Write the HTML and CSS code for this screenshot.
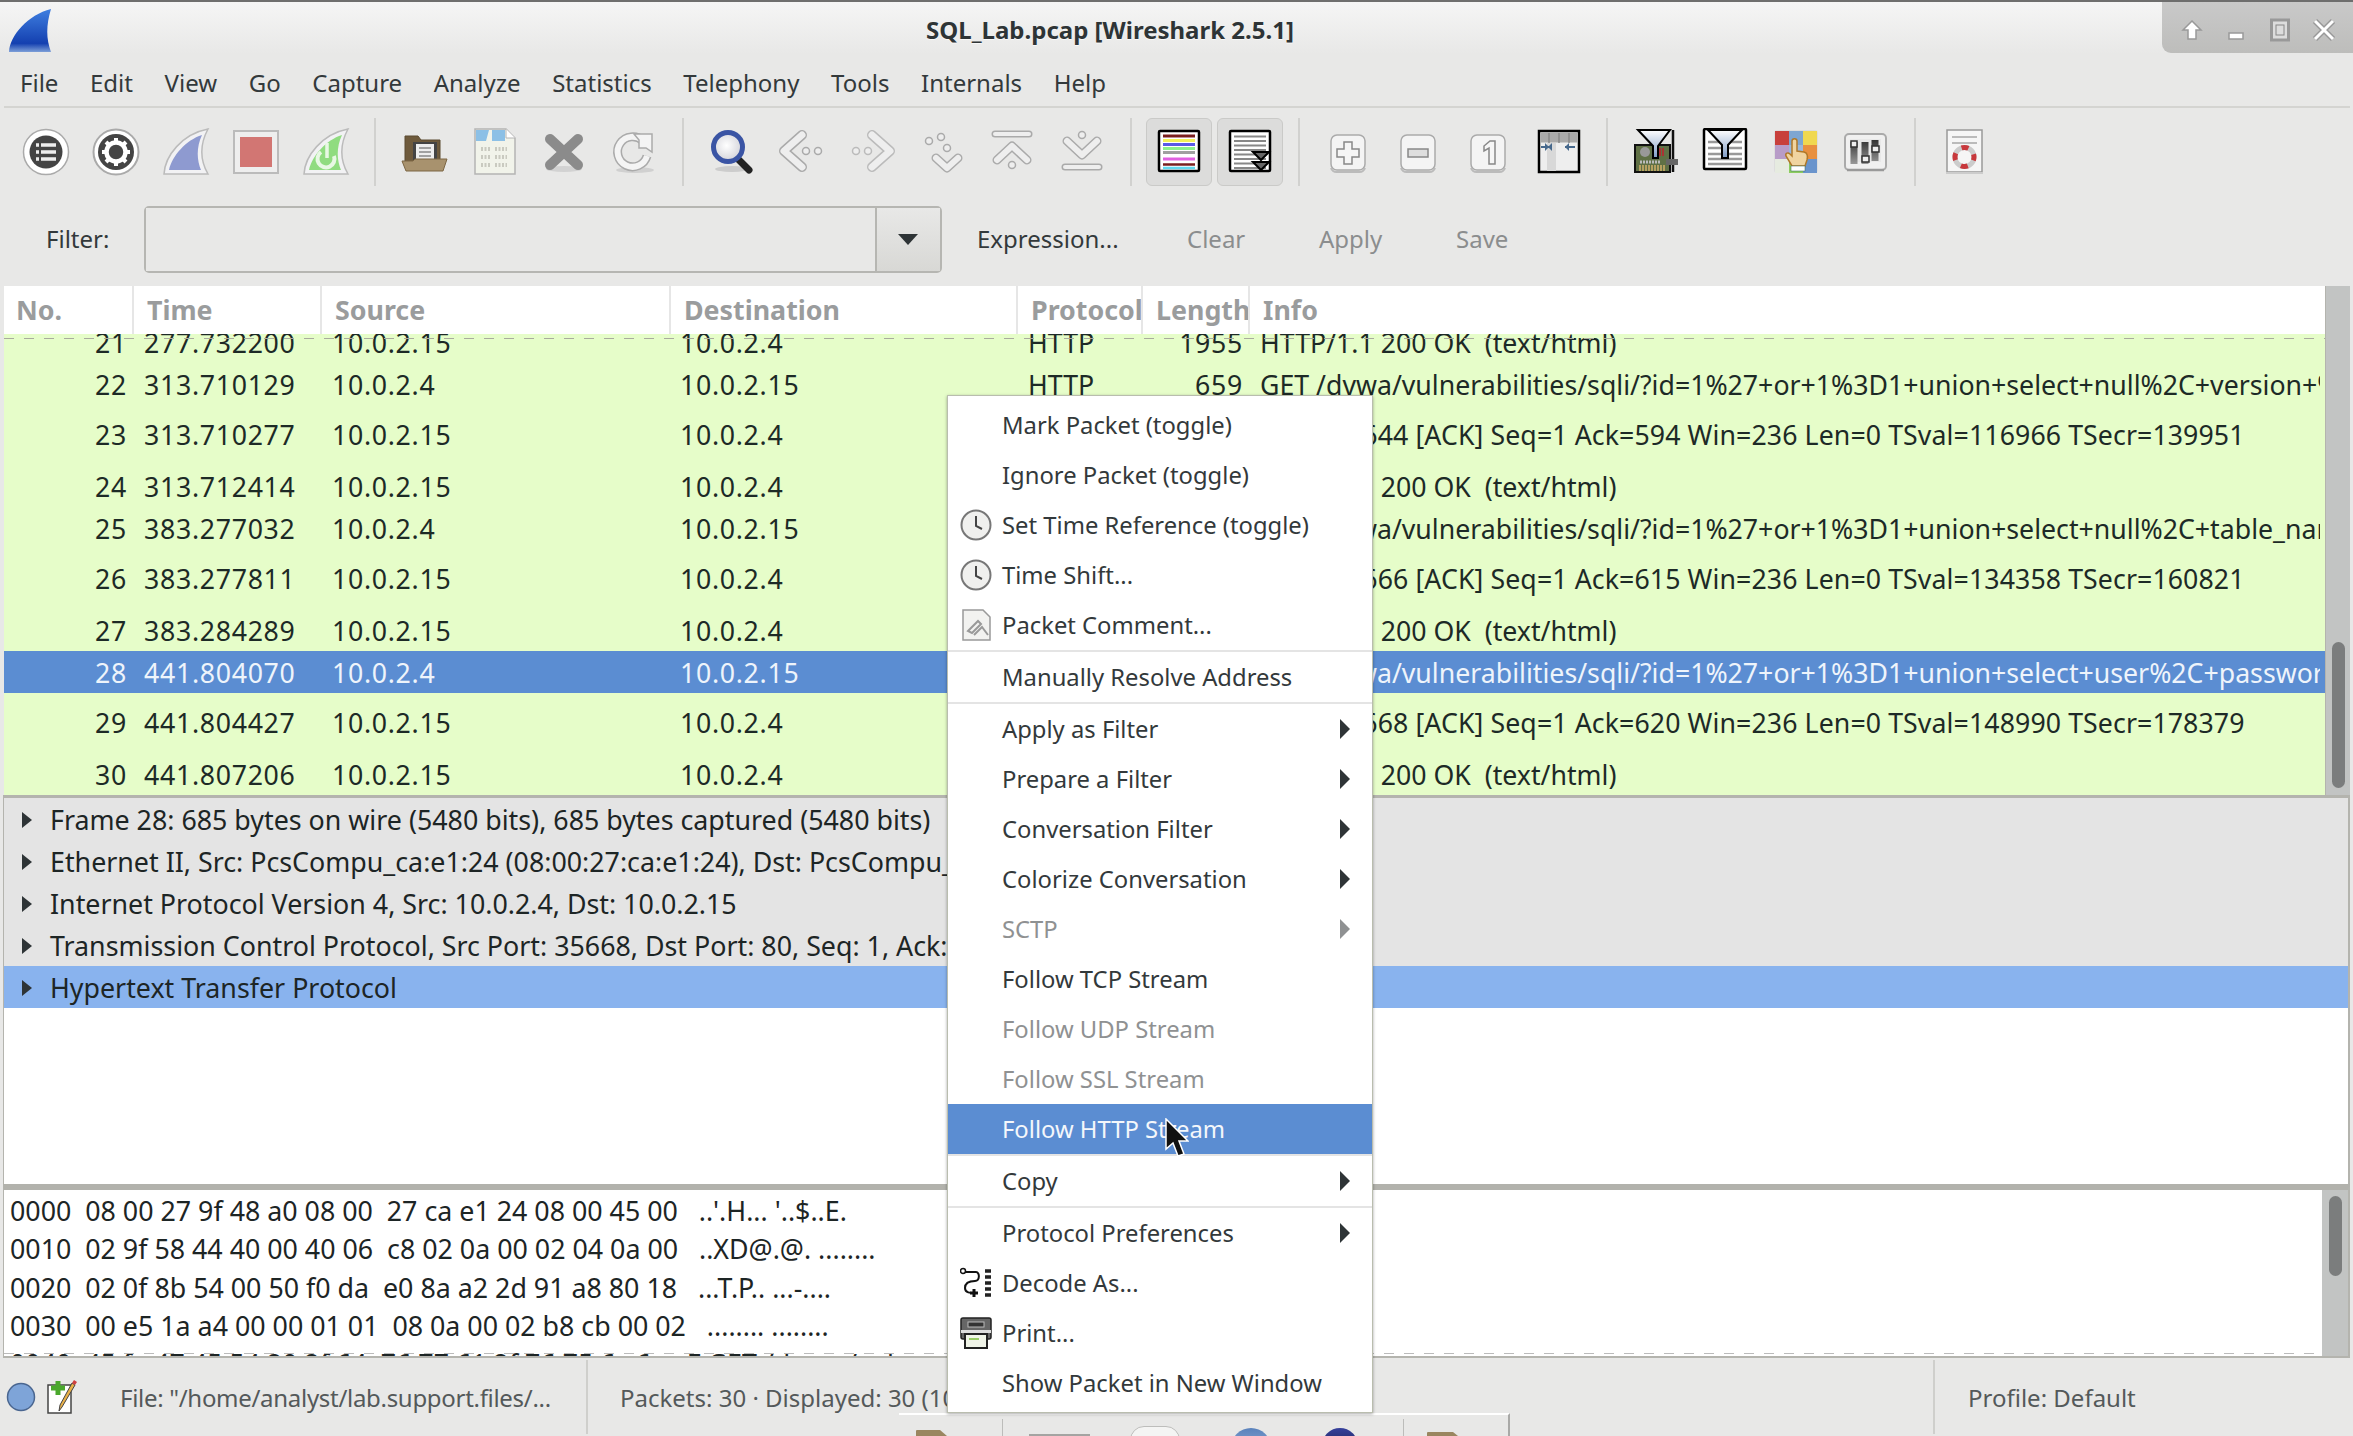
FILE: index.html
```html
<!DOCTYPE html>
<html lang="en">
<head>
<meta charset="utf-8">
<title>SQL_Lab.pcap [Wireshark 2.5.1]</title>
<link rel="stylesheet" href="styles.css">
</head>
<body>
<svg class="defs" aria-hidden="true">
  <defs>
    <linearGradient id="gFin" x1="0" y1="0" x2="0" y2="1"><stop offset="0" stop-color="#3f7fe0"/><stop offset=".8" stop-color="#1440b0"/><stop offset="1" stop-color="#7d9fd8"/></linearGradient>
    <linearGradient id="gFunnel" x1="0" y1="0" x2="0" y2="1"><stop offset="0" stop-color="#fff"/><stop offset="1" stop-color="#7d9ac4"/></linearGradient>
    <linearGradient id="gSlider" x1="0" y1="0" x2="0" y2="1"><stop offset="0" stop-color="#333"/><stop offset="1" stop-color="#999"/></linearGradient>
    <radialGradient id="gLens" cx=".45" cy=".45" r=".6"><stop offset="0" stop-color="#fff"/><stop offset="1" stop-color="#cfcfd6"/></radialGradient>
  </defs>
</svg>
<div class="window">
  <header class="titlebar">
    <svg class="logo" width="44" height="44" viewBox="0 0 44 44"><path d="M1 43C2 26 20 6 43 0 38 16 38 30 43 43Z" fill="url(#gFin)"/></svg>
    <div class="title">SQL_Lab.pcap [Wireshark 2.5.1]</div>
    <div class="winbtns">
      <svg width="24" height="24" viewBox="0 0 24 24"><path d="M12 3 21 12H16V21H8V12H3Z" fill="#fff" stroke="#999" stroke-width="1.5"/></svg>
      <svg width="24" height="24" viewBox="0 0 24 24"><rect x="5" y="15" width="14" height="6" fill="#fff" stroke="#999" stroke-width="1.5"/></svg>
      <svg width="24" height="24" viewBox="0 0 24 24"><rect x="3.5" y="2" width="17" height="20" fill="#ddd" stroke="#999" stroke-width="3"/><rect x="8" y="7" width="8" height="10" fill="none" stroke="#888"/></svg>
      <svg width="24" height="24" viewBox="0 0 24 24"><path d="M3 3 21 21M21 3 3 21" stroke="#999" stroke-width="6"/><path d="M3 3 21 21M21 3 3 21" stroke="#fff" stroke-width="3"/></svg>
    </div>
  </header>
  <nav class="menubar">
    <span>File</span><span>Edit</span><span>View</span><span>Go</span><span>Capture</span><span>Analyze</span><span>Statistics</span><span>Telephony</span><span>Tools</span><span>Internals</span><span>Help</span>
  </nav>
  <div class="toolbar">
    <div class="tool"><svg width="48" height="48" viewBox="0 0 48 48"><circle cx="24" cy="24" r="22.5" fill="#fff" stroke="#aaa" stroke-width="1.5"/><circle cx="24" cy="24" r="16.5" fill="#444"/><path d="M14 17h3M14 24h3M14 31h3M19 17h15M19 24h15M19 31h15" stroke="#eee" stroke-width="3.5"/></svg></div>
    <div class="tool"><svg width="48" height="48" viewBox="0 0 48 48"><circle cx="24" cy="24" r="22.5" fill="#fff" stroke="#aaa" stroke-width="2"/><circle cx="24" cy="24" r="18" fill="#444"/><circle cx="24" cy="24" r="9.500" fill="none" stroke="#fff" stroke-width="4.500"/><path d="M24 10v5M24 33v5M10 24h5M33 24h5M14 14l3.500 3.500M30.500 30.500 34 34M34 14l-3.500 3.500M17.500 30.500 14 34" stroke="#fff" stroke-width="4"/></svg></div>
    <div class="tool"><svg width="48" height="48" viewBox="0 0 48 48"><path d="M2 46C3 28 20 6 46 1 38 16 38 32 46 46Z" fill="#f2f2f4" stroke="#bbb" stroke-width="1.500"/><path d="M7 42C10 28 24 12 40 7 34 20 35 32 39 42Z" fill="#8e9ad0"/></svg></div>
    <div class="tool"><svg width="48" height="48" viewBox="0 0 48 48"><rect x="2" y="3" width="44" height="42" fill="#eee" stroke="#bbb" stroke-width="2"/><rect x="8" y="9" width="32" height="30" fill="#d27673"/></svg></div>
    <div class="tool"><svg width="48" height="48" viewBox="0 0 48 48"><path d="M2 46C3 28 20 6 46 1 38 16 38 32 46 46Z" fill="#f2f2f4" stroke="#bbb" stroke-width="1.500"/><path d="M7 42C10 28 24 12 40 7 34 20 35 32 39 42Z" fill="#90dc80"/><path d="M19 24A8.500 8.500 0 1 0 32 28" fill="none" stroke="#e8f8e4" stroke-width="4"/><path d="M25 15V30" stroke="#e8f8e4" stroke-width="3.500"/></svg></div>
    <i class="sep"></i>
    <div class="tool"><svg width="48" height="48" viewBox="0 0 48 48"><path d="M5 34V8H18L21 12H40V34Z" fill="#6e5a3c" stroke="#5a4a30"/><rect x="13" y="14" width="24" height="20" fill="#444"/><rect x="16" y="16" width="18" height="16" fill="#eee"/><path d="M19 20h12M19 24h12M19 28h12" stroke="#888" stroke-width="1.500"/><path d="M2 33H13L15 31H47L43 43H6Z" fill="#a8926e" stroke="#7c6644"/></svg></div>
    <div class="tool"><svg width="48" height="48" viewBox="0 0 48 48"><path d="M5 1H36L45 10V46H5Z" fill="#f1f3ea" stroke="#b4b4b4" stroke-width="1.500"/><path d="M6 2H19L16 13H6ZM22 2H35V13H22Z" fill="#8cc0e6"/><path d="M36 1V10H45" fill="#fff" stroke="#b4b4b4"/><path d="M11 21h9M25 21h12M11 29h9M25 29h12M11 37h9M25 37h12" stroke="#c9cac0" stroke-width="4" stroke-dasharray="2 1.500"/></svg></div>
    <div class="tool"><svg width="48" height="48" viewBox="0 0 48 48"><ellipse cx="24" cy="41" rx="18" ry="3" fill="#d2d2d2"/><path d="M10 11 38 37M38 11 10 37" stroke="#8b8b8b" stroke-width="10" stroke-linecap="round"/></svg></div>
    <div class="tool"><svg width="48" height="48" viewBox="0 0 48 48"><ellipse cx="25" cy="42" rx="19" ry="3" fill="#d0d0d0"/><path d="M37 28A15 15 0 1 1 33 13" fill="none" stroke="#aaa" stroke-width="9"/><path d="M37 28A15 15 0 1 1 33 13" fill="none" stroke="#f4f4f4" stroke-width="6"/><path d="M24 6H42V24L36 20 H29V12Z" fill="#f4f4f4" stroke="#aaa" stroke-width="1.500"/></svg></div>
    <i class="sep"></i>
    <div class="tool"><svg width="48" height="48" viewBox="0 0 48 48"><ellipse cx="24" cy="41" rx="17" ry="3" fill="#ccc"/><path d="M29 30 41 42" stroke="#222" stroke-width="7" stroke-linecap="round"/><circle cx="20" cy="19" r="14.500" fill="url(#gLens)" stroke="#3a54a4" stroke-width="5"/></svg></div>
    <div class="tool"><svg width="48" height="48" viewBox="0 0 48 48"><path d="M24 7 6 23 24 39" fill="none" stroke="#aaa" stroke-width="10" stroke-linecap="round" stroke-linejoin="round"/><path d="M24 7 6 23 24 39" fill="none" stroke="#eee" stroke-width="7" stroke-linecap="round" stroke-linejoin="round"/><circle cx="28" cy="23" r="3.500" fill="#eee" stroke="#aaa" stroke-width="1.500"/><circle cx="40" cy="23" r="3.500" fill="#eee" stroke="#aaa" stroke-width="1.500"/></svg></div>
    <div class="tool"><svg width="48" height="48" viewBox="0 0 48 48"><path d="M24 7 42 23 24 39" fill="none" stroke="#bbb" stroke-width="10" stroke-linecap="round" stroke-linejoin="round"/><path d="M24 7 42 23 24 39" fill="none" stroke="#eee" stroke-width="7" stroke-linecap="round" stroke-linejoin="round"/><circle cx="8" cy="23" r="3.500" fill="#eee" stroke="#bbb" stroke-width="1.500"/><circle cx="20" cy="23" r="3.500" fill="#eee" stroke="#bbb" stroke-width="1.500"/></svg></div>
    <div class="tool"><svg width="48" height="48" viewBox="0 0 48 48"><circle cx="11" cy="13" r="3.500" fill="#eee" stroke="#aaa" stroke-width="1.500"/><circle cx="23" cy="9" r="3.500" fill="#eee" stroke="#aaa" stroke-width="1.500"/><circle cx="29" cy="20" r="3.500" fill="#eee" stroke="#aaa" stroke-width="1.500"/><path d="M18 30 29 40 40 30" fill="none" stroke="#aaa" stroke-width="9" stroke-linecap="round" stroke-linejoin="round"/><path d="M18 30 29 40 40 30" fill="none" stroke="#eee" stroke-width="6" stroke-linecap="round" stroke-linejoin="round"/></svg></div>
    <div class="tool"><svg width="48" height="48" viewBox="0 0 48 48"><path d="M7 6H41" stroke="#aaa" stroke-width="7" stroke-linecap="round"/><path d="M7 6H41" stroke="#eee" stroke-width="4" stroke-linecap="round"/><path d="M9 32 24 18 39 32" fill="none" stroke="#aaa" stroke-width="9" stroke-linecap="round" stroke-linejoin="round"/><path d="M9 32 24 18 39 32" fill="none" stroke="#eee" stroke-width="6" stroke-linecap="round" stroke-linejoin="round"/><circle cx="24" cy="37" r="3.500" fill="#eee" stroke="#aaa" stroke-width="1.500"/></svg></div>
    <div class="tool"><svg width="48" height="48" viewBox="0 0 48 48"><circle cx="24" cy="7" r="3.500" fill="#eee" stroke="#aaa" stroke-width="1.500"/><path d="M9 13 24 27 39 13" fill="none" stroke="#aaa" stroke-width="9" stroke-linecap="round" stroke-linejoin="round"/><path d="M9 13 24 27 39 13" fill="none" stroke="#eee" stroke-width="6" stroke-linecap="round" stroke-linejoin="round"/><path d="M7 39H41" stroke="#aaa" stroke-width="7" stroke-linecap="round"/><path d="M7 39H41" stroke="#eee" stroke-width="4" stroke-linecap="round"/></svg></div>
    <i class="sep"></i>
    <div class="tool on first"><svg width="48" height="48" viewBox="0 0 48 48"><rect x="4" y="3" width="40" height="40" rx="1" fill="#fff" stroke="#000" stroke-width="2.500"/><path d="M8 8H40" stroke="#7a1e1e" stroke-width="3"/><path d="M8 12.500H40" stroke="#f2f25a" stroke-width="3"/><path d="M8 16.500H40" stroke="#5a5ae6" stroke-width="3"/><path d="M8 20.500H40" stroke="#8cf28c" stroke-width="3"/><path d="M8 24.500H40" stroke="#a0a0a0" stroke-width="3"/><path d="M8 31H40" stroke="#e060e0" stroke-width="3"/><path d="M8 36.500H40" stroke="#7a1e1e" stroke-width="2.500"/><path d="M8 40H40" stroke="#60d8f0" stroke-width="2.500"/></svg></div>
    <div class="tool on"><svg width="48" height="48" viewBox="0 0 48 48"><rect x="4" y="3" width="40" height="40" rx="1" fill="#fff" stroke="#000" stroke-width="2.500"/><path d="M8 8.500H40M8 13H40M8 17.500H40M8 22H40M8 26.500H40M8 31H40M8 35.500H40M8 40H40" stroke="#888" stroke-width="2"/><path d="M27 24H43L35 32ZM27 34H43L35 42Z" fill="#666" stroke="#000" stroke-width="2"/></svg></div>
    <i class="sep"></i>
    <div class="tool"><svg width="48" height="48" viewBox="0 0 48 48"><rect x="7" y="7" width="34" height="35" rx="6" fill="#f4f4f4" stroke="#aaa" stroke-width="1.500"/><path d="M7 40a6 6 0 0 0 6 4h22a6 6 0 0 0 6-4" fill="none" stroke="#bbb" stroke-width="2"/><path d="M20 14h8v7h7v8h-7v7h-8v-7h-7v-8h7Z" fill="#f6f6f6" stroke="#888" stroke-width="1.500"/></svg></div>
    <div class="tool"><svg width="48" height="48" viewBox="0 0 48 48"><rect x="7" y="7" width="34" height="35" rx="6" fill="#f4f4f4" stroke="#aaa" stroke-width="1.500"/><path d="M7 40a6 6 0 0 0 6 4h22a6 6 0 0 0 6-4" fill="none" stroke="#bbb" stroke-width="2"/><rect x="14" y="21" width="20" height="8" fill="#dedede" stroke="#888" stroke-width="1.500"/></svg></div>
    <div class="tool"><svg width="48" height="48" viewBox="0 0 48 48"><rect x="7" y="7" width="34" height="35" rx="6" fill="#f4f4f4" stroke="#aaa" stroke-width="1.500"/><path d="M7 40a6 6 0 0 0 6 4h22a6 6 0 0 0 6-4" fill="none" stroke="#bbb" stroke-width="2"/><path d="M26 13h5v23h-6V20l-5 3v-5Z" fill="#f6f6f6" stroke="#888" stroke-width="1.500"/></svg></div>
    <div class="tool"><svg width="48" height="48" viewBox="0 0 48 48"><rect x="5" y="3" width="40" height="41" fill="#eee" stroke="#000" stroke-width="2.500"/><rect x="6.500" y="4.500" width="37" height="10" fill="#aaa"/><path d="M15 5v10M25 5v10M35 5v10" stroke="#888" stroke-width="1.500"/><rect x="13" y="15" width="9" height="28" fill="#d8d8d8"/><path d="M7 19h10M31 19h10" stroke="#46688c" stroke-width="2"/><path d="M18 15v8l-4-4ZM35 15v8l-4-4ZM11 15v8l4-4Z" fill="#46688c"/></svg></div>
    <i class="sep"></i>
    <div class="tool"><svg width="48" height="48" viewBox="0 0 48 48"><rect x="3" y="17" width="35" height="27" fill="#5f7045" stroke="#111" stroke-width="2"/><circle cx="13" cy="24" r="5" fill="#999"/><path d="M28 20v8M31 20v8" stroke="#a33" stroke-width="2"/><path d="M8 34h20" stroke="#bbb" stroke-width="3" stroke-dasharray="2 1"/><path d="M7 40h26" stroke="#b5a060" stroke-width="6" stroke-dasharray="2 1"/><path d="M41 2V44" stroke="#111" stroke-width="2.500"/><rect x="34" y="31" width="12" height="6" fill="#666"/><path d="M6 2H38L26 18V30H21V18Z" fill="url(#gFunnel)" stroke="#000" stroke-width="2"/></svg></div>
    <div class="tool"><svg width="48" height="48" viewBox="0 0 48 48"><rect x="2" y="1" width="42" height="40" rx="1" fill="#fff" stroke="#000" stroke-width="2.500"/><path d="M6 14H40M6 20H40M6 26H40M6 31H40M6 36H40" stroke="#999" stroke-width="2.500"/><path d="M6 2H40L26 17V30H20V17Z" fill="url(#gFunnel)" stroke="#000" stroke-width="2"/></svg></div>
    <div class="tool"><svg width="48" height="48" viewBox="0 0 48 48"><rect x="2" y="2" width="44" height="43" rx="3" fill="#ddd"/><rect x="3" y="3" width="14" height="14" fill="#c8403c"/><rect x="17" y="3" width="14" height="14" fill="#7ea6d2"/><rect x="31" y="3" width="14" height="14" fill="#f0d850"/><rect x="3" y="17" width="14" height="14" fill="#b89cc8"/><rect x="17" y="17" width="14" height="14" fill="#9ab8dc"/><rect x="31" y="17" width="14" height="14" fill="#e89040"/><rect x="3" y="31" width="14" height="14" fill="#e6ebe0"/><rect x="17" y="31" width="14" height="14" fill="#8ccc60"/><rect x="31" y="31" width="14" height="14" fill="#6a94cc"/><path d="M20 13c0-3 5-3 5 0v10l7 1c4 1 4 4 3 8l-2 6H20l-6-10c-1-3 2-4 4-2l2 2Z" fill="#f0d4a0" stroke="#b07828" stroke-width="1.500"/><rect x="19" y="38" width="14" height="5" fill="#fff" stroke="#365" stroke-width=".5"/></svg></div>
    <div class="tool"><svg width="48" height="48" viewBox="0 0 48 48"><rect x="3" y="6" width="41" height="36" rx="4" fill="#f0f0f0" stroke="#aaa" stroke-width="2"/><path d="M5 42h37" stroke="#999" stroke-width="2.500"/><rect x="8" y="11" width="31" height="23" fill="#e8e8e8"/><path d="M12 14V36M23 14V36M33 12V33" stroke="url(#gSlider)" stroke-width="7"/><rect x="9" y="13" width="6" height="6" fill="#eee" stroke="#333" stroke-width="1.500"/><rect x="20" y="28" width="7" height="6" fill="#eee" stroke="#333" stroke-width="1.500"/><rect x="30" y="18" width="7" height="6" fill="#eee" stroke="#333" stroke-width="1.500"/></svg></div>
    <i class="sep"></i>
    <div class="tool"><svg width="48" height="48" viewBox="0 0 48 48"><rect x="7" y="2" width="35" height="42" fill="#f6f6f6" stroke="#999" stroke-width="1.500"/><path d="M6 45h37" stroke="#ccc" stroke-width="2"/><path d="M12 9H37M12 15H37" stroke="#bbb" stroke-width="2"/><circle cx="24.500" cy="29" r="9.500" fill="none" stroke="#ccc" stroke-width="5"/><circle cx="24.500" cy="29" r="9.500" fill="none" stroke="#c8383c" stroke-width="5" stroke-dasharray="7 8" stroke-dashoffset="3.500"/></svg></div>
  </div>
  <div class="filterbar">
    <label class="flabel">Filter:</label>
    <div class="finput"><div class="ffield"></div><div class="fdrop"><i></i></div></div>
    <span class="fbtn exp">Expression...</span><span class="fbtn off clr">Clear</span><span class="fbtn off app">Apply</span><span class="fbtn off sav">Save</span>
  </div>
  <main class="panes">
    <section class="plist">
      <div class="ptable">
        <div class="phead"><span>No.</span><span>Time</span><span>Source</span><span>Destination</span><span>Protocol</span><span>Length</span><span>Info</span></div>
        <div class="pbody">
          <div class="pdash"></div>
          <div class="pscroll">
            <div class="row"><span>21</span><span>277.732200</span><span>10.0.2.15</span><span>10.0.2.4</span><span>HTTP</span><span>1955</span><span>HTTP/1.1 200 OK  (text/html)</span></div>
            <div class="row"><span>22</span><span>313.710129</span><span>10.0.2.4</span><span>10.0.2.15</span><span>HTTP</span><span>659</span><span>GET /dvwa/vulnerabilities/sqli/?id=1%27+or+1%3D1+union+select+null%2C+version+%23&amp;Submit</span></div>
            <div class="row tall"><span>23</span><span>313.710277</span><span>10.0.2.15</span><span>10.0.2.4</span><span>TCP</span><span>66</span><span>80 → 35644 [ACK] Seq=1 Ack=594 Win=236 Len=0 TSval=116966 TSecr=139951</span></div>
            <div class="row"><span>24</span><span>313.712414</span><span>10.0.2.15</span><span>10.0.2.4</span><span>HTTP</span><span>1708</span><span>HTTP/1.1 200 OK  (text/html)</span></div>
            <div class="row"><span>25</span><span>383.277032</span><span>10.0.2.4</span><span>10.0.2.15</span><span>HTTP</span><span>680</span><span>GET /dvwa/vulnerabilities/sqli/?id=1%27+or+1%3D1+union+select+null%2C+table_name+from</span></div>
            <div class="row tall"><span>26</span><span>383.277811</span><span>10.0.2.15</span><span>10.0.2.4</span><span>TCP</span><span>66</span><span>80 → 35666 [ACK] Seq=1 Ack=615 Win=236 Len=0 TSval=134358 TSecr=160821</span></div>
            <div class="row"><span>27</span><span>383.284289</span><span>10.0.2.15</span><span>10.0.2.4</span><span>HTTP</span><span>4716</span><span>HTTP/1.1 200 OK  (text/html)</span></div>
            <div class="row sel"><span>28</span><span>441.804070</span><span>10.0.2.4</span><span>10.0.2.15</span><span>HTTP</span><span>685</span><span>GET /dvwa/vulnerabilities/sqli/?id=1%27+or+1%3D1+union+select+user%2C+password+from+users</span></div>
            <div class="row tall"><span>29</span><span>441.804427</span><span>10.0.2.15</span><span>10.0.2.4</span><span>TCP</span><span>66</span><span>80 → 35668 [ACK] Seq=1 Ack=620 Win=236 Len=0 TSval=148990 TSecr=178379</span></div>
            <div class="row"><span>30</span><span>441.807206</span><span>10.0.2.15</span><span>10.0.2.4</span><span>HTTP</span><span>2163</span><span>HTTP/1.1 200 OK  (text/html)</span></div>
          </div>
        </div>
      </div>
      <div class="vscroll list"><i></i></div>
    </section>
    <section class="details">
      <div class="drow"><i class="tw"></i>Frame 28: 685 bytes on wire (5480 bits), 685 bytes captured (5480 bits)</div>
      <div class="drow"><i class="tw"></i>Ethernet II, Src: PcsCompu_ca:e1:24 (08:00:27:ca:e1:24), Dst: PcsCompu_9f:48:a0 (08:00:27:9f:48:a0)</div>
      <div class="drow"><i class="tw"></i>Internet Protocol Version 4, Src: 10.0.2.4, Dst: 10.0.2.15</div>
      <div class="drow"><i class="tw"></i>Transmission Control Protocol, Src Port: 35668, Dst Port: 80, Seq: 1, Ack: 1, Len: 619</div>
      <div class="drow cur"><i class="tw"></i>Hypertext Transfer Protocol</div>
    </section>
    <section class="hexpane">
      <div class="hextext">
        <div class="hrow">0000  08 00 27 9f 48 a0 08 00  27 ca e1 24 08 00 45 00   ..'.H... '..$..E.</div>
        <div class="hrow">0010  02 9f 58 44 40 00 40 06  c8 02 0a 00 02 04 0a 00   ..XD@.@. ........</div>
        <div class="hrow">0020  02 0f 8b 54 00 50 f0 da  e0 8a a2 2d 91 a8 80 18   ...T.P.. ...-....</div>
        <div class="hrow">0030  00 e5 1a a4 00 00 01 01  08 0a 00 02 b8 cb 00 02   ........ ........</div>
        <div class="hrow">0040  45 fa 47 45 54 20 2f 64  76 77 61 2f 76 75 6c 6e   E.GET /d vwa/vuln</div>
      </div>
      <div class="hdash"></div>
      <div class="vscroll hex"><i></i></div>
    </section>
  </main>
  <footer class="statusbar">
    <svg class="st-dot" width="30" height="30" viewBox="0 0 30 30"><circle cx="15" cy="15" r="13.500" fill="#7ea4d8" stroke="#4a6690" stroke-width="1.500"/></svg>
    <svg class="st-note" width="32" height="34" viewBox="0 0 32 34"><rect x="1" y="5" width="23" height="28" fill="#fff" stroke="#444" stroke-width="1.500"/><path d="M11 1v14M4 8h14" stroke="#4aa82c" stroke-width="5"/><path d="M28 5 15 27l-3 4 1-6L25 3Z" fill="#e8b048" stroke="#444"/><path d="M25 3l3 2 2-3-3-2Z" fill="#d04040"/></svg>
    <span class="st-file">File: "/home/analyst/lab.support.files/...</span>
    <i class="st-sep"></i>
    <span class="st-pkts">Packets: 30 · Displayed: 30 (100.0%) · Load time: 0:0.0</span>
    <i class="st-sep end"></i>
    <span class="st-prof">Profile: Default</span>
  </footer>
</div>

<div class="ctxmenu">
  <div class="mi"><span class="mic"></span>Mark Packet (toggle)</div>
  <div class="mi"><span class="mic"></span>Ignore Packet (toggle)</div>
  <div class="mi"><span class="mic"><svg width="32" height="32" viewBox="0 0 32 32"><circle cx="16" cy="16" r="14.500" fill="#f0f0ee" stroke="#777" stroke-width="2"/><path d="M16 7V17L22 20" fill="none" stroke="#444" stroke-width="2"/></svg></span>Set Time Reference (toggle)</div>
  <div class="mi"><span class="mic"><svg width="32" height="32" viewBox="0 0 32 32"><circle cx="16" cy="16" r="14.500" fill="#f0f0ee" stroke="#777" stroke-width="2"/><path d="M16 7V17L22 20" fill="none" stroke="#444" stroke-width="2"/></svg></span>Time Shift...</div>
  <div class="mi"><span class="mic"><svg width="32" height="32" viewBox="0 0 32 32"><path d="M3 1H23L30 8V31H3Z" fill="#f2f2f0" stroke="#999" stroke-width="1.500"/><path d="M8 22 18 12l3 3-9 9ZM14 26l8-8 6 8" fill="none" stroke="#999" stroke-width="2"/></svg></span>Packet Comment...</div>
  <hr class="msep">
  <div class="mi"><span class="mic"></span>Manually Resolve Address</div>
  <hr class="msep">
  <div class="mi"><span class="mic"></span>Apply as Filter<i class="arr"></i></div>
  <div class="mi"><span class="mic"></span>Prepare a Filter<i class="arr"></i></div>
  <div class="mi"><span class="mic"></span>Conversation Filter<i class="arr"></i></div>
  <div class="mi"><span class="mic"></span>Colorize Conversation<i class="arr"></i></div>
  <div class="mi dis"><span class="mic"></span>SCTP<i class="arr"></i></div>
  <div class="mi"><span class="mic"></span>Follow TCP Stream</div>
  <div class="mi dis"><span class="mic"></span>Follow UDP Stream</div>
  <div class="mi dis"><span class="mic"></span>Follow SSL Stream</div>
  <div class="mi hl"><span class="mic"></span>Follow HTTP Stream</div>
  <hr class="msep">
  <div class="mi"><span class="mic"></span>Copy<i class="arr"></i></div>
  <hr class="msep">
  <div class="mi"><span class="mic"></span>Protocol Preferences<i class="arr"></i></div>
  <div class="mi"><span class="mic"><svg width="32" height="32" viewBox="0 0 32 32"><circle cx="3" cy="4" r="2.500" fill="#fff" stroke="#111" stroke-width="1.500"/><path d="M5 5H16C20 5 20 14 15 14 9 14 5 16 5 21 5 26 10 26 16 26" fill="none" stroke="#111" stroke-width="2"/><path d="M18 26h-8M14 22v8" stroke="#111" stroke-width="3"/><path d="M25 4h6M25 10h6M25 16h6M25 22h6M25 28h6" stroke="#222" stroke-width="3.500"/></svg></span>Decode As...</div>
  <div class="mi"><span class="mic"><svg width="32" height="32" viewBox="0 0 32 32"><rect x="1" y="1" width="30" height="21" rx="2" fill="#666" stroke="#222" stroke-width="1.500"/><rect x="8" y="5" width="16" height="5" fill="#333" stroke="#bbb"/><rect x="1" y="13" width="30" height="3" fill="#ddd"/><rect x="5" y="17" width="22" height="14" fill="#f0f4e8" stroke="#222" stroke-width="2"/><path d="M9 22h10" stroke="#9c6" stroke-width="2"/></svg></span>Print...</div>
  <div class="mi"><span class="mic"></span>Show Packet in New Window</div>
</div>

<svg class="cursor" width="24" height="40" viewBox="0 0 24 40"><path d="M1 1V31L8 25 13 38 19 36 14 23H23Z" fill="#111" stroke="#fff" stroke-width="1.500"/></svg>

<div class="dock">
  <svg class="d1" width="31" height="6" viewBox="0 0 31 6"><path d="M0 6V1Q0 0 1 0H24L31 6Z" fill="#9a8660"/></svg>
  <i class="dsep s1"></i>
  <i class="dbar"></i>
  <i class="dpill"></i>
  <i class="dglobe"></i>
  <i class="dglobe dark"></i>
  <i class="dsep s2"></i>
  <svg class="d2" width="31" height="4" viewBox="0 0 31 4"><path d="M0 4V1Q0 0 1 0H26L31 4Z" fill="#9a8660"/></svg>
</div>
</body>
</html>
```
FILE: styles.css
```css
* { box-sizing: border-box; }
html, body { margin: 0; padding: 0; height: 100%; overflow: hidden; }
body { font-family: "Noto Sans", sans-serif; font-size: 24px; color: #2e3436; background: #e8e8e7; }
.defs { display: block; width: 0; height: 0; }
svg { display: block; }
.window { width: 2353px; height: 1436px; display: flex; flex-direction: column; background: #e8e8e7; }

.titlebar { height: 55px; flex: none; display: flex; align-items: flex-start; border-top: 2px solid #6e6e6e; background: linear-gradient(#f5f5f5 0, #e8e8e7 52px); }
.logo { margin: 7px 0 0 8px; flex: none; }
.title { flex: 1; text-align: center; font-weight: 700; line-height: 53px; height: 53px; margin-top: 1px; padding-left: 6px; color: #2e3436; text-shadow: 0 1px 0 rgba(255,255,255,.7); }
.winbtns { width: 191px; height: 51px; flex: none; display: flex; align-items: flex-start; padding: 16px 0 0 18px; gap: 20px; background: linear-gradient(#c9c9c9, #bdbdbb); border-bottom-left-radius: 9px; }

.menubar { height: 53px; flex: none; display: flex; align-items: center; margin: 0 3px 0 4px; border-bottom: 2px solid #d4d4d1; padding: 3px 0 0 16px; }
.menubar span { margin-right: 31.600px; color: #33393b; }

.toolbar { flex: none; height: 68px; margin-top: 10px; display: flex; padding-left: 11px; }
.tool { width: 70px; height: 68px; display: flex; align-items: center; justify-content: center; flex: none; }
.tool.on { background: #dcdcdb; border: 1.5px solid #cacac8; border-radius: 6px; width: 66px; margin: 0 2px; }
.tool.on.first { margin: 0 3px 0 1px; }
.sep { width: 2px; height: 68px; margin: 0 13px; background: #d1d1cf; flex: none; }

.filterbar { flex: none; height: 67px; margin-top: 20px; display: flex; align-items: center; }
.flabel { margin-left: 46px; width: 98px; color: #33393b; padding-bottom: 3px; }
.finput { width: 798px; height: 67px; display: flex; border: 2px solid #b6b6b2; border-radius: 5px; }
.ffield { width: 729px; background: #e8e8e7; }
.fdrop { flex: 1; border-left: 2px solid #b6b6b2; background: linear-gradient(#e8e8e7, #d8d8d5); display: flex; align-items: center; justify-content: center; padding-right: 2px; }
.fdrop i { width: 0; height: 0; border-left: 10px solid transparent; border-right: 10px solid transparent; border-top: 11px solid #2e3436; }
.fbtn { color: #33393b; padding-bottom: 3px; }
.fbtn.off { color: #8b8d8e; }
.exp { margin-left: 35px; width: 210px; }
.clr { width: 132px; }
.app { width: 137px; }

.panes { flex: none; height: 1072px; margin: 13px 3px 0 3px; display: flex; flex-direction: column; }
.plist { height: 512px; flex: none; display: flex; border-bottom: 3px solid #b4b4ae; }
.ptable { flex: 1; min-width: 0; display: flex; flex-direction: column; padding-left: 1px; }
.phead, .row { display: grid; grid-template-columns: 130px 188px 349px 347px 125px 107px 1fr; }
.phead { height: 48px; flex: none; background: #fff; font-size: 26.800px; font-weight: 700; color: #9a9c9d; line-height: 48px; }
.phead span { padding-left: 13px; border-right: 2px solid #e6e6e6; overflow: hidden; white-space: nowrap; }
.phead span:first-child { padding-left: 12px; }
.phead span:last-child { border-right: 0; }
.pbody { flex: 1; min-height: 0; position: relative; overflow: hidden; background: #e6fdc9; }
.pdash { position: absolute; left: 0; right: 0; top: 4px; height: 1px; z-index: 1; background: repeating-linear-gradient(90deg, #a9ab9e 0 10px, transparent 10px 20px); }
.pscroll { margin-top: -13px; }
.row { height: 42px; line-height: 43px; font-size: 26.700px; color: #1d2a26; background: #e6fdc9; white-space: nowrap; }
.row.tall { height: 60px; line-height: 60px; }
.row.sel { background: #5b8dd2; color: #eef4fb; }
.row span { padding-left: 10px; overflow: hidden; }
.row span:nth-child(-n+4), .row span:nth-child(6) { letter-spacing: .7px; }
.row span:nth-child(4) { padding-left: 9px; }
.row span:nth-child(1), .row span:nth-child(6) { text-align: right; padding: 0 7px 0 0; }
.row span:last-child { white-space: pre; clip-path: inset(0 5px 0 0); }
.row.tall span:last-child { letter-spacing: .1px; }
.vscroll { flex: none; background: #c2c4c3; }
.vscroll i { display: block; background: #7b7d7d; border-radius: 7px; }
.vscroll.list { width: 25px; padding: 356px 5px 0 6px; border-left: 1px solid #b4b4ae; }
.vscroll.list i { height: 146px; }
.details { height: 386px; flex: none; background: #fff; border-left: 1px solid #b4b4ae; border-right: 2px solid #b4b4ae; }
.drow { height: 42px; line-height: 42px; font-size: 26.800px; background: #e4e4e4; display: flex; align-items: center; color: #1d2525; white-space: nowrap; overflow: hidden; padding: 2px 0 0 18px; }
.drow.cur { background: #89b3ee; }
.tw { width: 0; height: 0; border-left: 10px solid #2e3436; border-top: 8px solid transparent; border-bottom: 8px solid transparent; margin-right: 18px; flex: none; }
.hexpane { flex: 1; min-height: 0; border-top: 6px solid #b2b2ac; border-left: 1px solid #b4b4ae; border-right: 2px solid #b4b4ae; border-bottom: 2px solid #b4b4ae; background: #fff; display: flex; position: relative; overflow: hidden; height: 174px; }
.hextext { flex: 1; min-width: 0; padding: 2px 0 0 6px; overflow: hidden; font-size: 26.800px; }
.hrow { height: 38.300px; line-height: 38.300px; white-space: pre; color: #1d2525; }
.hdash { position: absolute; left: 0; right: 26px; bottom: 2px; height: 1px; background: repeating-linear-gradient(90deg, #bbb 0 10px, transparent 10px 20px); }
.vscroll.hex { width: 26px; padding: 6px 6px 0 7px; }
.vscroll.hex i { height: 80px; }

.statusbar { flex: 1; display: flex; align-items: center; color: #54595a; min-height: 0; }
.st-dot { margin-left: 6px; }
.st-note { margin-left: 11px; }
.st-file { margin-left: 41px; width: 466px; white-space: nowrap; letter-spacing: -.3px; }
.st-sep { width: 2px; height: 74px; background: #cfcfcc; flex: none; }
.st-pkts { margin-left: 32px; width: 1313px; white-space: nowrap; overflow: hidden; }
.st-prof { margin-left: 33px; }

.ctxmenu { position: absolute; left: 947px; top: 395px; width: 426px; background: #fff; border: 1px solid #b9bdae; padding: 4px 0; box-shadow: 0 1px 3px rgba(0,0,0,.35); color: #33393b; z-index: 5; font-size: 23.800px; }
.mi { height: 50px; display: flex; align-items: center; padding: 0 22px 1px 12px; white-space: nowrap; }
.mic { width: 34px; height: 32px; flex: none; margin-right: 8px; }
.mi.dis { color: #8f9192; }
.mi.hl { background: #5b8dd2; color: #f4f7fb; }
.msep { height: 2px; margin: 0; border: 0; background: #e4e4e4; }
.arr { margin-left: auto; width: 0; height: 0; border-left: 10px solid #2e3436; border-top: 10px solid transparent; border-bottom: 10px solid transparent; }
.mi.dis .arr { border-left-color: #8f9192; }
.cursor { position: absolute; left: 1165px; top: 1118px; z-index: 6; }

.dock { position: absolute; left: 899px; top: 1413px; width: 611px; height: 23px; background: #e8e8e7; border-top: 2px solid #fff; border-right: 2px solid #a9a9a7; display: flex; overflow: hidden; z-index: 4; }
.d1 { margin: 15px 0 0 17px; }
.dsep { width: 1px; height: 20px; margin-top: 4px; background: #bcbcba; flex: none; }
.s1 { margin-left: 55px; }
.dbar { width: 61px; height: 8px; margin: 19px 0 0 26px; background: #a4a4a2; flex: none; }
.dpill { width: 50px; height: 30px; margin: 11px 0 0 40px; background: #f4f4f3; border: 1.500px solid #bdbdbb; border-radius: 14px 14px 0 0; flex: none; }
.dglobe { width: 40px; height: 30px; margin: 13px 0 0 51px; background: linear-gradient(#5a82bc, #9ab4d8); border-radius: 20px 20px 0 0; flex: none; }
.dglobe.dark { width: 36px; background: linear-gradient(#36409c, #141838); }
.s2 { margin-left: 45px; }
.d2 { margin: 17px 0 0 23px; }
```
